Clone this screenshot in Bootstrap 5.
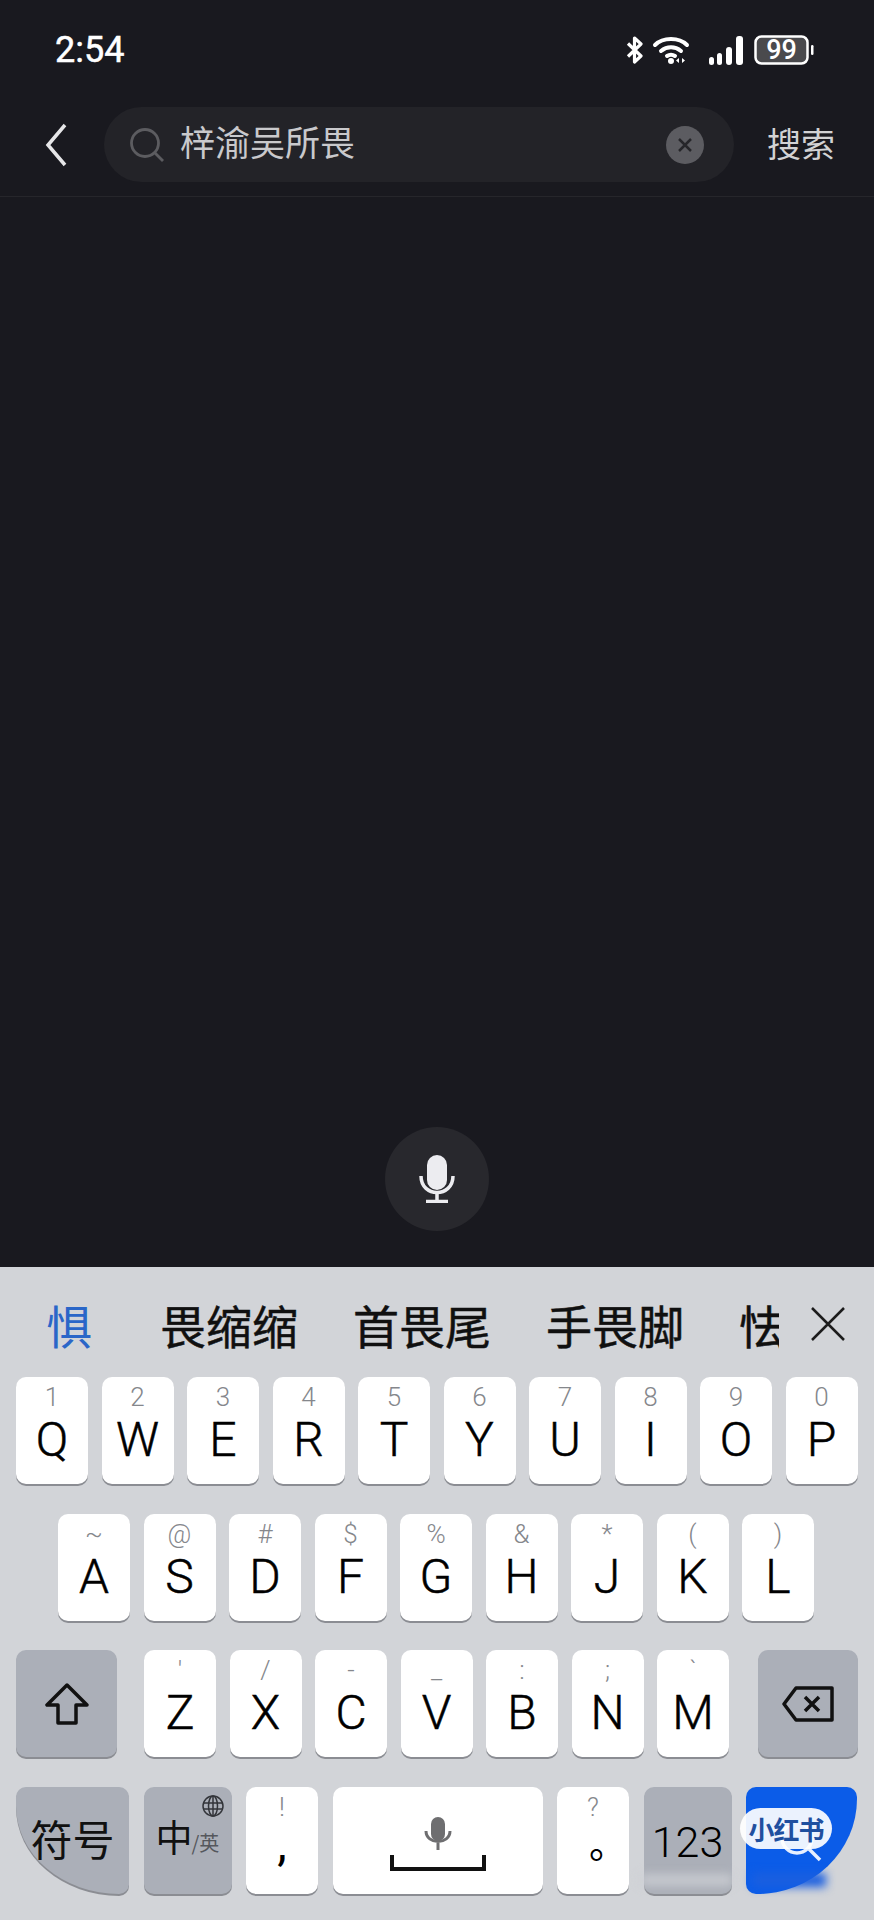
<!DOCTYPE html>
<html lang="zh-CN">
<head>
  <meta charset="UTF-8">
  <meta name="viewport" content="width=device-width, initial-scale=1.0">
  <title>搜索</title>
  <link href="https://cdn.jsdelivr.net/npm/bootstrap@5.3.3/dist/css/bootstrap.min.css" rel="stylesheet">
  <style>
    body {
      background: #19191f;
      font-family: Roboto, "Noto Sans CJK SC", sans-serif;
    }
    .cjk { font-family: "Noto Sans CJK SC", sans-serif; }

    /* pantalla */
    .pantalla { width: 874px; height: 1920px; overflow: hidden; }
    .barra-estat { height: 100px; padding: 0 60px 0 55px; color: #fff; }
    .hora { font-size: 36px; font-weight: 400; line-height: 1; -webkit-text-stroke: .5px #fff; }
    .cap-cerca { height: 97px; padding: 7px 40px 14px 45px; border-bottom: 1px solid #26262b; }
    .pill-cerca { width: 630px; height: 75px; margin-left: 37px; margin-right: 33px; padding: 0 30px 0 25px; background: #232328; }
    .text-cerca { font-size: 35px; line-height: 1; color: #c9c9cc; margin-left: 15px; padding-bottom: 8px; }
    .esborra { width: 38px; height: 38px; background: #5c5c61; }
    .boto-cerca { font-size: 34px; line-height: 1; color: #d2d2d4; white-space: nowrap; padding-bottom: 4px; }
    .cercle-micro { width: 104px; height: 104px; margin-bottom: 36px; background: #28282d; }

    /* teclat */
    .teclat { height: 653px; background: #d2d4d8; }
    .candidats { height: 110px; padding: 4px 28px 0 46px; }
    .llista-cand { width: 733px; overflow: hidden; gap: 55px; font-size: 46px; line-height: 1.5; color: #101010; white-space: nowrap; -webkit-text-stroke: .5px #101010; }
    .cand-blau { color: #2a66c8; -webkit-text-stroke: 0; margin-right: 13px; }
    .fila { height: 107px; margin-bottom: 29.5px; gap: 13.5px; }
    .fila-1 { padding: 0 17px 0 16px; }
    .fila-2 { padding: 0 60px 0 58px; }
    .fila-3 { padding: 0 17px 0 16px; }
    .fila-4 { padding: 0 17px 0 16px; gap: 14.5px; }
    .tecla {
      width: 72px;
      height: 107px;
      padding-top: 6px;
      background: #fff;
      border-radius: 10px;
      box-shadow: 0 2px 0 #8b8d93;
      text-align: center;
      color: #000;
      flex: none;
    }
    .pista { display: block; height: 28px; font-size: 26px; line-height: 28px; font-weight: 300; color: #85878c; }
    .lletra { display: block; height: 58px; font-size: 48px; line-height: 58px; font-weight: 300; -webkit-text-stroke: .5px #000; }
    .fn { background: #abafb8; padding-top: 0; }
    .tecla-maj { width: 101px; margin-right: 13.5px; }
    .tecla-esb { width: 100px; margin-left: 15.5px; }
    .tecla-sim { width: 113px; border-bottom-left-radius: 105px 90px; font-size: 42px; line-height: 1; padding-top: 30px; color: #111; }
    .tecla-idi { width: 88px; }
    .tecla-espai { width: 210px; }
    .tecla-123 { width: 88px; font-size: 43px; font-weight: 300; line-height: 1; padding-top: 34px; }
    .tecla-enviar { width: 111px; background: #0b5ce8; border-bottom-right-radius: 100px 95px; box-shadow: none; }
    .idi-gran { position: absolute; left: 12px; top: 31px; font-size: 37px; line-height: 1; color: #111; }
    .idi-petit { position: absolute; left: 48px; top: 46px; font-size: 20px; line-height: 1; color: #55575c; }
    .globus { position: absolute; right: 8px; top: 8px; }
    .coma { display: block; height: 46px; font-size: 48px; line-height: 46px; font-weight: 400; }
    .punt { display: block; height: 42px; padding-left: 30px; font-size: 38px; line-height: 42px; color: #000; }

    /* marca d'aigua */
    .marca { left: 740px; top: 1808px; width: 92px; height: 41px; background: rgba(255, 255, 255, .92); color: #1f4f9f; font-size: 26px; font-weight: 700; line-height: 41px; text-align: center; letter-spacing: -1px; }
    .lupa-marca { left: 778px; top: 1826px; }
    .taca-gris { left: 640px; top: 1874px; width: 92px; height: 12px; background: rgba(205, 207, 212, .8); filter: blur(5px); }
    .taca-blava { left: 752px; top: 1873px; width: 74px; height: 14px; background: #1a5fe0; filter: blur(5px); }
  </style>
</head>
<body>
  <div class="pantalla position-relative d-flex flex-column">
    <!-- Barra d'estat -->
    <div class="barra-estat d-flex align-items-center justify-content-between">
      <span class="hora">2:54</span>
      <div class="d-flex align-items-center">
        <svg width="18" height="28" viewBox="0 0 18 28" fill="none" stroke="#fff" stroke-width="3.200" stroke-linejoin="round"><path d="M2 7.500 15 20 8.500 26V2L15 8 2 20.500"/></svg>
        <svg class="ms-2" width="40" height="28" viewBox="0 0 40 28" fill="none" stroke="#fff" stroke-width="4" stroke-linecap="round"><path d="M3 9C11 1 27 1 35 9"/><path d="M9 15c6-5 14-5 20 0"/><path d="M15 20c3-2 5-2 8 0"/><circle cx="19" cy="25" r="3" fill="#fff" stroke="none"/><path d="M27 22v5l-3-2.500zM30 22v5l3-2.500z" fill="#fff" stroke="none"/></svg>
        <svg class="ms-3" width="38" height="29" viewBox="0 0 38 29" fill="#fff"><rect x="1" y="21" width="5" height="8" rx="2.500"/><rect x="9" y="17" width="5" height="12" rx="2.500"/><rect x="18" y="11" width="6" height="18" rx="3"/><rect x="28" y="0" width="7" height="29" rx="3"/></svg>
        <div class="position-relative ms-2 d-flex">
          <svg width="60" height="30" viewBox="0 0 60 30"><rect x="1.500" y="1.500" width="52" height="27" rx="6" fill="#4a4a4d" stroke="#fff" stroke-width="2.500"/><rect x="57" y="10" width="2.500" height="10" rx="1.200" fill="#fff"/><text x="27.500" y="24" text-anchor="middle" fill="#fff" font-family="Roboto, sans-serif" font-size="27" font-weight="500">99</text></svg>
        </div>
      </div>
    </div>

    <!-- Cerca -->
    <div class="cap-cerca d-flex align-items-center">
      <svg class="flex-shrink-0" width="22" height="44" viewBox="0 0 22 44" fill="none" stroke="#e6e6e8" stroke-width="3.500"><path d="M20 2 3 22l17 20"/></svg>
      <div class="pill-cerca d-flex align-items-center rounded-pill flex-shrink-0">
        <svg class="flex-shrink-0" width="36" height="34" viewBox="0 0 36 34" fill="none" stroke="#5c5c60" stroke-width="2.800"><circle cx="16" cy="15" r="13.500"/><path d="m26 25 8 8"/></svg>
        <span class="text-cerca cjk flex-grow-1">梓渝吴所畏</span>
        <span class="esborra rounded-circle d-flex align-items-center justify-content-center flex-shrink-0">
          <svg width="16" height="16" viewBox="0 0 16 16" stroke="#26262a" stroke-width="2.500"><path d="m2 2 12 12M14 2 2 14"/></svg>
        </span>
      </div>
      <span class="boto-cerca cjk">搜索</span>
    </div>

    <!-- Zona buida amb micro -->
    <div class="flex-grow-1 d-flex align-items-end justify-content-center">
      <div class="cercle-micro rounded-circle d-flex align-items-center justify-content-center">
        <svg width="36" height="48" viewBox="0 0 36 48" fill="none" stroke="#ececf0" stroke-width="3.500"><rect x="8" y="0" width="20" height="35" rx="10" fill="#ececf0" stroke="none"/><path d="M2 21c0 22 32 22 32 0"/><path d="M18 38v8"/><path d="M7 46.500h22"/></svg>
      </div>
    </div>

    <!-- Teclat -->
    <div class="teclat">
      <div class="candidats d-flex align-items-center justify-content-between">
        <div class="llista-cand cjk d-flex">
          <span class="cand-blau">惧</span>
          <span>畏缩缩</span>
          <span>首畏尾</span>
          <span>手畏脚</span>
          <span>怯</span>
        </div>
        <svg width="36" height="36" viewBox="0 0 36 36" stroke="#1c1c1c" stroke-width="2.500"><path d="m2 2 32 32M34 2 2 34"/></svg>
      </div>

      <div class="fila fila-1 d-flex">
        <div class="tecla"><span class="pista">1</span><span class="lletra">Q</span></div>
        <div class="tecla"><span class="pista">2</span><span class="lletra">W</span></div>
        <div class="tecla"><span class="pista">3</span><span class="lletra">E</span></div>
        <div class="tecla"><span class="pista">4</span><span class="lletra">R</span></div>
        <div class="tecla"><span class="pista">5</span><span class="lletra">T</span></div>
        <div class="tecla"><span class="pista">6</span><span class="lletra">Y</span></div>
        <div class="tecla"><span class="pista">7</span><span class="lletra">U</span></div>
        <div class="tecla"><span class="pista">8</span><span class="lletra">I</span></div>
        <div class="tecla"><span class="pista">9</span><span class="lletra">O</span></div>
        <div class="tecla"><span class="pista">0</span><span class="lletra">P</span></div>
      </div>

      <div class="fila fila-2 d-flex">
        <div class="tecla"><span class="pista">~</span><span class="lletra">A</span></div>
        <div class="tecla"><span class="pista">@</span><span class="lletra">S</span></div>
        <div class="tecla"><span class="pista">#</span><span class="lletra">D</span></div>
        <div class="tecla"><span class="pista">$</span><span class="lletra">F</span></div>
        <div class="tecla"><span class="pista">%</span><span class="lletra">G</span></div>
        <div class="tecla"><span class="pista">&amp;</span><span class="lletra">H</span></div>
        <div class="tecla"><span class="pista">*</span><span class="lletra">J</span></div>
        <div class="tecla"><span class="pista">(</span><span class="lletra">K</span></div>
        <div class="tecla"><span class="pista">)</span><span class="lletra">L</span></div>
      </div>

      <div class="fila fila-3 d-flex">
        <div class="tecla fn tecla-maj d-flex align-items-center justify-content-center">
          <svg width="44" height="42" viewBox="0 0 44 42" fill="none" stroke="#111" stroke-width="3.500" stroke-linejoin="round"><path d="M22 2 2 22h11v18h18V22h11z"/></svg>
        </div>
        <div class="tecla"><span class="pista">'</span><span class="lletra">Z</span></div>
        <div class="tecla"><span class="pista">/</span><span class="lletra">X</span></div>
        <div class="tecla"><span class="pista">-</span><span class="lletra">C</span></div>
        <div class="tecla"><span class="pista">_</span><span class="lletra">V</span></div>
        <div class="tecla"><span class="pista">:</span><span class="lletra">B</span></div>
        <div class="tecla"><span class="pista">;</span><span class="lletra">N</span></div>
        <div class="tecla"><span class="pista">`</span><span class="lletra">M</span></div>
        <div class="tecla fn tecla-esb d-flex align-items-center justify-content-center">
          <svg width="52" height="36" viewBox="0 0 52 36" fill="none" stroke="#111" stroke-width="3.500" stroke-linejoin="round"><path d="M14 2h36v32H14L2 18z"/><path d="m23 11 14 14M37 11 23 25"/></svg>
        </div>
      </div>

      <div class="fila fila-4 d-flex">
        <div class="tecla fn tecla-sim cjk">符号</div>
        <div class="tecla fn tecla-idi position-relative cjk">
          <svg class="globus" width="22" height="22" viewBox="0 0 22 22" fill="none" stroke="#33353a" stroke-width="1.500"><circle cx="11" cy="11" r="10"/><ellipse cx="11" cy="11" rx="4.500" ry="10"/><path d="M11 1v20M1.500 8h19M1.500 14h19"/></svg>
          <span class="idi-gran">中</span>
          <span class="idi-petit">/英</span>
        </div>
        <div class="tecla"><span class="pista">!</span><span class="coma">,</span></div>
        <div class="tecla tecla-espai d-flex flex-column align-items-center">
          <svg class="mt-4" width="28" height="34" viewBox="0 0 28 34" fill="none" stroke="#6e6e70" stroke-width="3"><rect x="7" y="0" width="14" height="24" rx="7" fill="#6e6e70" stroke="none"/><path d="M2 14c0 14 24 14 24 0"/><path d="M14 26v7"/></svg>
          <svg class="mt-1" width="96" height="16" viewBox="0 0 96 16" fill="none" stroke="#111" stroke-width="4"><path d="M2 0v14h92V0"/></svg>
        </div>
        <div class="tecla"><span class="pista">?</span><span class="punt cjk">。</span></div>
        <div class="tecla fn tecla-123">123</div>
        <div class="tecla tecla-enviar"></div>
      </div>
    </div>

    <!-- Marca d'aigua sobre el teclat -->
    <svg class="lupa-marca position-absolute" width="46" height="38" viewBox="0 0 46 38" fill="none" stroke="#e8f0ff" stroke-width="3.500"><circle cx="19" cy="12" r="15"/><path d="m31 23 11 11"/></svg>
    <span class="marca position-absolute rounded-pill cjk">小红书</span>
    <div class="taca-gris position-absolute"></div>
    <div class="taca-blava position-absolute"></div>
  </div>
  <script src="https://cdn.jsdelivr.net/npm/bootstrap@5.3.3/dist/js/bootstrap.bundle.min.js"></script>
</body>
</html>
